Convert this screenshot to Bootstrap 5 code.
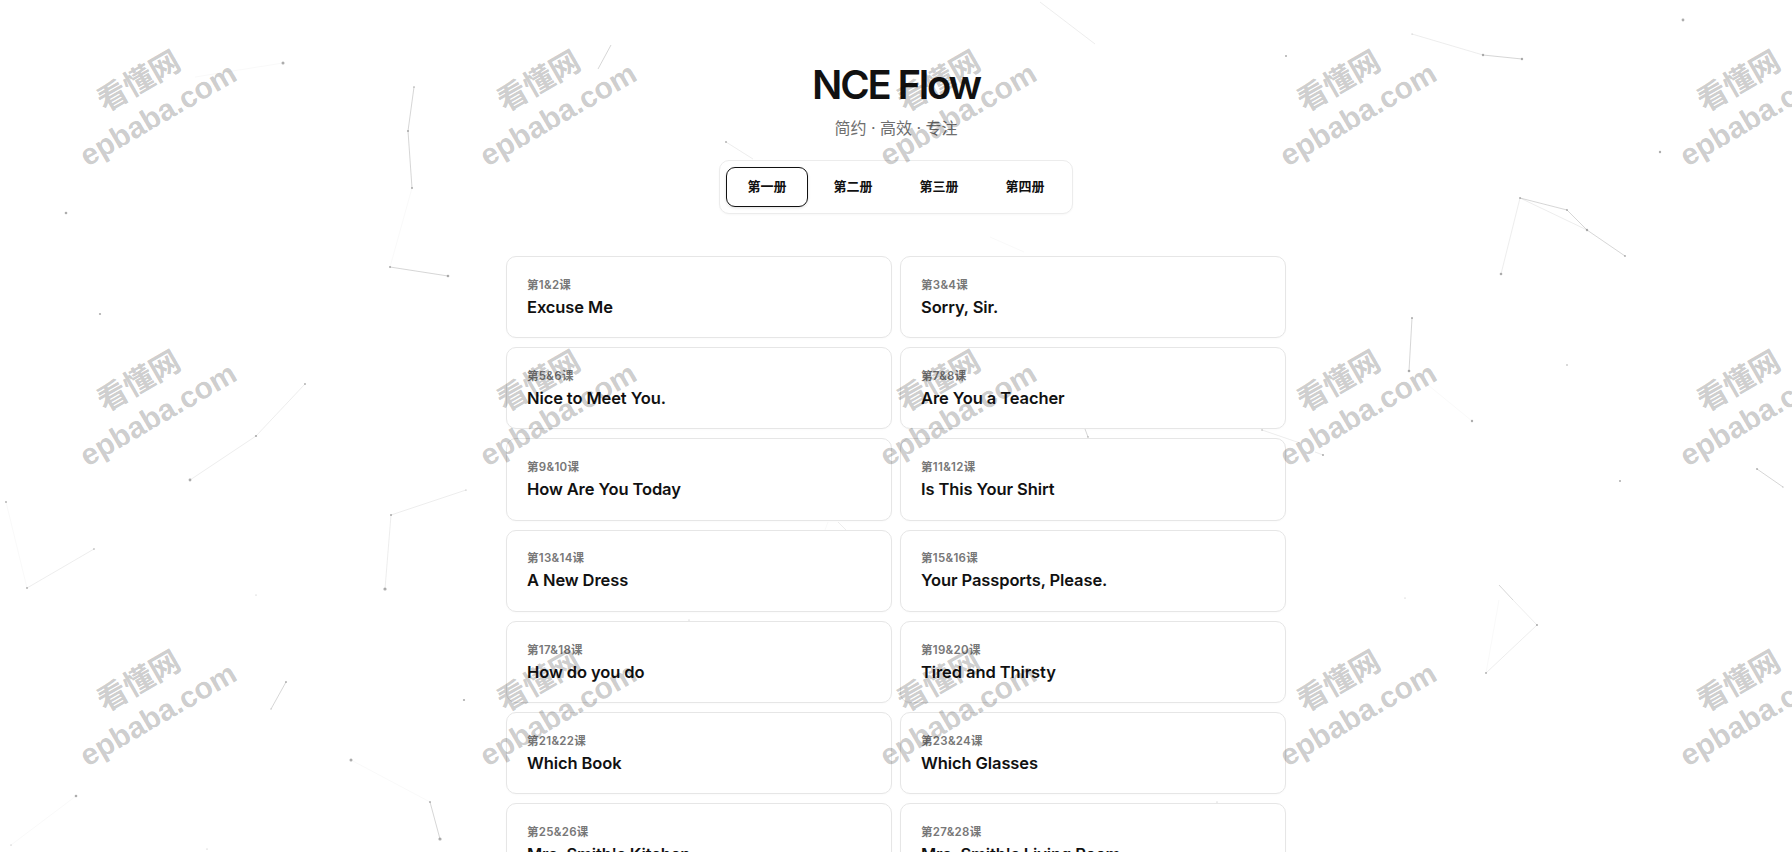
<!DOCTYPE html>
<html lang="zh-CN">
<head>
<meta charset="utf-8">
<title>NCE Flow</title>
<link rel="stylesheet" href="https://cdn.jsdelivr.net/npm/bootstrap@5.3.0/dist/css/bootstrap.min.css">
<style>
body{background:#fff;color:#111;font-family:Inter,"Noto Sans CJK SC",sans-serif}
.stars{position:absolute;inset:0;width:100%;height:100%;z-index:0}
.stars line{stroke:#8a8a8a;stroke-width:.7}
.stars circle{fill:#8a8a8a}
.page{position:relative;z-index:1;padding-top:61px}
.brand-title{font-size:40px;font-weight:600;letter-spacing:-2.2px;line-height:48px;color:#111;margin:0 0 7px}
.brand-sub{font-size:16px;line-height:24px;color:#6e6e6e;margin:0 0 19.5px}
.book-tabs{background:#fff;border:1px solid #ececec;border-radius:10px;padding:6px;gap:4px;box-shadow:0 1px 2px rgba(0,0,0,.03)}
.book-tab{width:82px;height:40.5px;padding:0;font-size:13px;font-weight:600;line-height:37px;color:#111;border:1px solid transparent;border-radius:9px}
.book-tab.is-on{border-color:#111;box-shadow:0 1px 3px rgba(0,0,0,.12)}
.lesson-wrap{width:780px;margin:41.7px auto 0}
.lesson-grid{--bs-gutter-x:8px;--bs-gutter-y:8.9px}
.lesson-box{height:82.4px;background:#fff;border:1px solid #e6e6e6;border-radius:10px;padding:20.9px 20px 0;box-shadow:0 1px 2px rgba(0,0,0,.02)}
.lesson-no{font-size:11.5px;font-weight:600;line-height:14px;letter-spacing:.3px;color:#777;margin-bottom:3px}
.lesson-name{font-size:16.5px;font-weight:600;line-height:24px;color:#111;letter-spacing:-.1px}
.wm-layer{position:absolute;left:-51px;top:-52px;z-index:2;display:grid;grid-template-columns:repeat(5,400px);grid-auto-rows:300px;pointer-events:none}
.wm-tile{display:flex;align-items:center;justify-content:center}
.wm-text{transform:rotate(-30deg);text-align:center;white-space:nowrap;color:rgba(0,0,0,.21);font-family:"Liberation Sans","Noto Sans CJK SC",sans-serif;font-weight:700;font-size:30px;line-height:38px}
</style>
</head>
<body class="position-relative vh-100 overflow-hidden">
<svg class="stars" viewBox="0 0 1792 852" aria-hidden="true">
  <g stroke-opacity=".07"><line x1="283" y1="63" x2="195" y2="77"/><line x1="412" y1="188" x2="390" y2="267"/><line x1="6" y1="502" x2="27" y2="588"/><line x1="351" y1="760" x2="430" y2="802"/><line x1="76" y1="796" x2="11" y2="845"/><line x1="1486" y1="673" x2="1499" y2="600"/><line x1="1428" y1="385" x2="1472" y2="421"/><line x1="990" y1="237" x2="1024" y2="252"/><line x1="825" y1="530" x2="828" y2="522"/></g>
  <g stroke-opacity=".22"><line x1="27" y1="588" x2="94" y2="549"/><line x1="305" y1="384" x2="256" y2="436"/><line x1="256" y1="436" x2="190" y2="480"/><line x1="391" y1="515" x2="466" y2="490"/><line x1="391" y1="515" x2="385" y2="589"/><line x1="1412" y1="34" x2="1483" y2="55"/><line x1="1520" y1="198" x2="1501" y2="274"/><line x1="1520" y1="198" x2="1587" y2="230"/><line x1="1513" y1="600" x2="1537" y2="625"/><line x1="1537" y1="625" x2="1486" y2="673"/><line x1="1040" y1="2" x2="1095" y2="44"/><line x1="726" y1="142" x2="753" y2="159"/><line x1="1262" y1="430" x2="1300" y2="443"/><line x1="1315" y1="452" x2="1323" y2="455"/><line x1="838" y1="522" x2="846" y2="530"/></g>
  <g stroke-opacity=".5"><line x1="414" y1="87" x2="408" y2="131"/><line x1="408" y1="131" x2="412" y2="188"/><line x1="390" y1="267" x2="448" y2="276"/><line x1="286" y1="682" x2="271" y2="709"/><line x1="430" y1="802" x2="440" y2="839"/><line x1="1483" y1="55" x2="1522" y2="59"/><line x1="1520" y1="198" x2="1567" y2="210"/><line x1="1567" y1="210" x2="1587" y2="230"/><line x1="1587" y1="230" x2="1625" y2="256"/><line x1="1412" y1="318" x2="1409" y2="371"/><line x1="1757" y1="469" x2="1783" y2="487"/><line x1="1499" y1="585" x2="1513" y2="600"/><line x1="598" y1="69" x2="611" y2="45"/><line x1="1085" y1="429" x2="1088" y2="437"/></g>
  <g fill-opacity=".7">
    <circle cx="283" cy="63" r="1.5"/><circle cx="414" cy="87" r=".8"/><circle cx="408" cy="131" r="1"/><circle cx="412" cy="188" r="1"/><circle cx="390" cy="267" r="1"/><circle cx="448" cy="276" r="1.3"/><circle cx="66" cy="213" r="1.3"/>
    <circle cx="100" cy="314" r="1.1"/><circle cx="305" cy="384" r=".9"/><circle cx="256" cy="436" r="1.1"/><circle cx="190" cy="480" r="1.4"/><circle cx="6" cy="502" r=".9"/><circle cx="27" cy="588" r=".9"/><circle cx="94" cy="549" r=".8"/><circle cx="391" cy="515" r="1"/><circle cx="466" cy="490" r=".6"/><circle cx="385" cy="589" r="1.6"/><circle cx="256" cy="595" r=".5"/>
    <circle cx="286" cy="682" r=".9"/><circle cx="271" cy="709" r=".6"/><circle cx="351" cy="760" r="1.5"/><circle cx="430" cy="802" r=".9"/><circle cx="440" cy="839" r="1.6"/><circle cx="464" cy="700" r="1.1"/><circle cx="76" cy="796" r="1.3"/><circle cx="11" cy="845" r=".6"/><circle cx="207" cy="849" r=".5"/>
    <circle cx="1412" cy="34" r=".5"/><circle cx="1483" cy="55" r="1.2"/><circle cx="1522" cy="59" r="1.2"/><circle cx="1683" cy="20" r="1.4"/><circle cx="1660" cy="152" r="1.2"/><circle cx="1520" cy="198" r=".9"/><circle cx="1567" cy="210" r=".9"/><circle cx="1587" cy="230" r="1.2"/><circle cx="1625" cy="256" r=".9"/><circle cx="1501" cy="274" r="1.3"/>
    <circle cx="1412" cy="318" r="1"/><circle cx="1409" cy="371" r="1.3"/><circle cx="1472" cy="421" r="1.2"/><circle cx="1567" cy="365" r=".8"/><circle cx="1620" cy="481" r="1"/><circle cx="1757" cy="469" r=".9"/><circle cx="1783" cy="487" r=".6"/><circle cx="1323" cy="455" r="1"/><circle cx="1405" cy="598" r=".5"/>
    <circle cx="1537" cy="625" r="1"/><circle cx="1486" cy="673" r=".9"/><circle cx="726" cy="142" r=".9"/><circle cx="1286" cy="56" r="1"/><circle cx="1088" cy="437" r=".8"/><circle cx="1262" cy="430" r=".7"/><circle cx="689" cy="620" r=".5"/><circle cx="1217" cy="802" r=".5"/>
  </g>
</svg>

<div class="page">
  <header class="text-center">
    <h1 class="brand-title">NCE Flow</h1>
    <p class="brand-sub">简约 · 高效 · 专注</p>
    <nav class="book-tabs d-inline-flex" aria-label="册">
      <a class="btn book-tab is-on" href="#">第一册</a>
      <a class="btn book-tab" href="#">第二册</a>
      <a class="btn book-tab" href="#">第三册</a>
      <a class="btn book-tab" href="#">第四册</a>
    </nav>
  </header>
  <main class="lesson-wrap">
    <div class="row lesson-grid">
      <div class="col-6"><div class="lesson-box"><div class="lesson-no">第1&amp;2课</div><div class="lesson-name">Excuse Me</div></div></div>
      <div class="col-6"><div class="lesson-box"><div class="lesson-no">第3&amp;4课</div><div class="lesson-name">Sorry, Sir.</div></div></div>
      <div class="col-6"><div class="lesson-box"><div class="lesson-no">第5&amp;6课</div><div class="lesson-name">Nice to Meet You.</div></div></div>
      <div class="col-6"><div class="lesson-box"><div class="lesson-no">第7&amp;8课</div><div class="lesson-name">Are You a Teacher</div></div></div>
      <div class="col-6"><div class="lesson-box"><div class="lesson-no">第9&amp;10课</div><div class="lesson-name">How Are You Today</div></div></div>
      <div class="col-6"><div class="lesson-box"><div class="lesson-no">第11&amp;12课</div><div class="lesson-name">Is This Your Shirt</div></div></div>
      <div class="col-6"><div class="lesson-box"><div class="lesson-no">第13&amp;14课</div><div class="lesson-name">A New Dress</div></div></div>
      <div class="col-6"><div class="lesson-box"><div class="lesson-no">第15&amp;16课</div><div class="lesson-name">Your Passports, Please.</div></div></div>
      <div class="col-6"><div class="lesson-box"><div class="lesson-no">第17&amp;18课</div><div class="lesson-name">How do you do</div></div></div>
      <div class="col-6"><div class="lesson-box"><div class="lesson-no">第19&amp;20课</div><div class="lesson-name">Tired and Thirsty</div></div></div>
      <div class="col-6"><div class="lesson-box"><div class="lesson-no">第21&amp;22课</div><div class="lesson-name">Which Book</div></div></div>
      <div class="col-6"><div class="lesson-box"><div class="lesson-no">第23&amp;24课</div><div class="lesson-name">Which Glasses</div></div></div>
      <div class="col-6"><div class="lesson-box"><div class="lesson-no">第25&amp;26课</div><div class="lesson-name">Mrs. Smith's Kitchen</div></div></div>
      <div class="col-6"><div class="lesson-box"><div class="lesson-no">第27&amp;28课</div><div class="lesson-name">Mrs. Smith's Living Room</div></div></div>
    </div>
  </main>
</div>

<div class="wm-layer" aria-hidden="true">
  <div class="wm-tile"><div class="wm-text">看懂网<br>epbaba.com</div></div>
  <div class="wm-tile"><div class="wm-text">看懂网<br>epbaba.com</div></div>
  <div class="wm-tile"><div class="wm-text">看懂网<br>epbaba.com</div></div>
  <div class="wm-tile"><div class="wm-text">看懂网<br>epbaba.com</div></div>
  <div class="wm-tile"><div class="wm-text">看懂网<br>epbaba.com</div></div>
  <div class="wm-tile"><div class="wm-text">看懂网<br>epbaba.com</div></div>
  <div class="wm-tile"><div class="wm-text">看懂网<br>epbaba.com</div></div>
  <div class="wm-tile"><div class="wm-text">看懂网<br>epbaba.com</div></div>
  <div class="wm-tile"><div class="wm-text">看懂网<br>epbaba.com</div></div>
  <div class="wm-tile"><div class="wm-text">看懂网<br>epbaba.com</div></div>
  <div class="wm-tile"><div class="wm-text">看懂网<br>epbaba.com</div></div>
  <div class="wm-tile"><div class="wm-text">看懂网<br>epbaba.com</div></div>
  <div class="wm-tile"><div class="wm-text">看懂网<br>epbaba.com</div></div>
  <div class="wm-tile"><div class="wm-text">看懂网<br>epbaba.com</div></div>
  <div class="wm-tile"><div class="wm-text">看懂网<br>epbaba.com</div></div>
</div>
<script src="https://cdn.jsdelivr.net/npm/bootstrap@5.3.0/dist/js/bootstrap.bundle.min.js"></script>
</body>
</html>
